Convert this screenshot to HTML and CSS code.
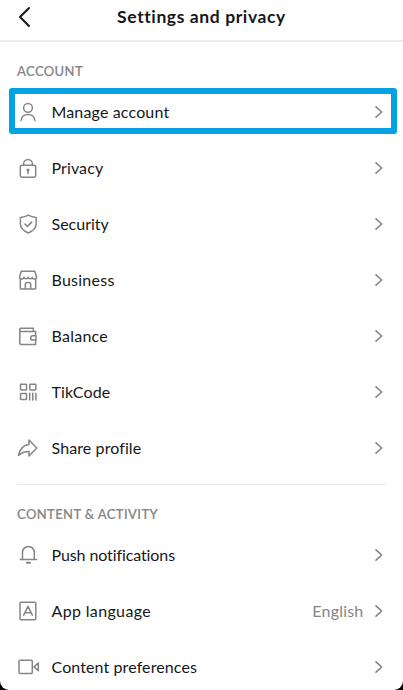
FILE: index.html
```html
<!DOCTYPE html>
<html lang="en">
<head>
<meta charset="utf-8">
<title>Settings and privacy</title>
<link rel="stylesheet" href="styles.css">
</head>
<body>
<div class="screen">
<header class="header">
  <svg class="back" viewBox="0 0 14 22"><path d="M12 2 3 11l9 9"/></svg>
  <h1>Settings and privacy</h1>
</header>
<main>
<section>
  <h2>ACCOUNT</h2>
  <ul>
    <li class="row selected"><svg class="icon" viewBox="0 0 24 24"><circle cx="12" cy="7.800" r="4.400"/><path d="M5 20.500c.5-4 3.100-6 7-6s6.500 2 7 6"/></svg><span class="label manage">Manage account</span><svg class="chevron" viewBox="0 0 8 12"><path d="m1 .8 5.700 5.200L1 11.200"/></svg></li>
    <li class="row"><svg class="icon" viewBox="0 0 24 24"><rect x="4.300" y="9.300" width="15.400" height="11.900" rx="2"/><path d="M7.600 9.300V7.800a4.400 4.400 0 0 1 8.800 0v1.500M12 14.500v3"/><circle class="solid" cx="12" cy="14" r="1.600"/></svg><span class="label">Privacy</span><svg class="chevron" viewBox="0 0 8 12"><path d="m1 .8 5.700 5.200L1 11.200"/></svg></li>
    <li class="row"><svg class="icon" viewBox="0 0 24 24"><path d="M12.300 3.200c2.400 1.400 4.900 2 7.900 2.300v6.300c0 4.300-3.100 7.200-7.900 9.200-4.800-2-7.900-4.900-7.900-9.200V5.500c3-.3 5.500-.9 7.900-2.300ZM9 12.100l2.400 2.300 4.300-4.300"/></svg><span class="label security">Security</span><svg class="chevron" viewBox="0 0 8 12"><path d="m1 .8 5.700 5.200L1 11.200"/></svg></li>
    <li class="row"><svg class="icon" viewBox="0 0 24 24"><path d="M5.200 3.300h13.600l1.800 5.600c0 2.600-3.900 2.900-4.300.4-.5 2-3.700 2-4.200 0-.5 2-3.700 2-4.200 0-.4 2.500-4.300 2.200-4.300-.4ZM4.300 11v9.300a.6.6 0 0 0 .6.6h14.200a.6.6 0 0 0 .6-.6V11M9.300 20.900v-4.500a2 2 0 0 1 2-2h1.400a2 2 0 0 1 2 2v4.500"/></svg><span class="label business">Business</span><svg class="chevron" viewBox="0 0 8 12"><path d="m1 .8 5.700 5.200L1 11.200"/></svg></li>
    <li class="row"><svg class="icon" viewBox="0 0 24 24"><path d="M17.300 7.400V4.300H5a1.200 1.200 0 0 0-1.200 1.200v13.700A1.200 1.200 0 0 0 5 20.400h14.600v-4.200M3.800 7.400h15.800v4.300M20 11.800h-3.200a2.100 2.100 0 0 0 0 4.200H20Z"/></svg><span class="label business">Balance</span><svg class="chevron" viewBox="0 0 8 12"><path d="m1 .8 5.700 5.200L1 11.200"/></svg></li>
    <li class="row"><svg class="icon" viewBox="0 0 24 24"><rect x="4.500" y="4.300" width="6" height="5.700" rx=".4"/><rect x="13.800" y="4.300" width="6" height="5.700" rx=".4"/><rect x="4.500" y="13.500" width="6" height="6" rx=".4"/><path d="M13.700 13.200v6.700m3.100-6.700v6.700m3.100-6.700v6.700"/></svg><span class="label">TikCode</span><svg class="chevron" viewBox="0 0 8 12"><path d="m1 .8 5.700 5.200L1 11.200"/></svg></li>
    <li class="row"><svg class="icon" viewBox="0 0 24 24"><path d="M13 3.900 20.700 12 13 19.900v-4.500c-4.600 0-7.400 1-10.500 4.100 1.300-6.500 5-10.400 10.500-11Z"/></svg><span class="label share">Share profile</span><svg class="chevron" viewBox="0 0 8 12"><path d="m1 .8 5.700 5.200L1 11.200"/></svg></li>
  </ul>
</section>
<section class="divided">
  <h2 class="wide">CONTENT &amp; ACTIVITY</h2>
  <ul>
    <li class="row"><svg class="icon" viewBox="0 0 24 24"><path d="M4.200 16.600h16.400M6.500 16.600V9.300a5.900 5.900 0 0 1 11.800 0v7.300"/><path class="clapper" d="M10.900 19.800h3"/></svg><span class="label push">Push notifications</span><svg class="chevron" viewBox="0 0 8 12"><path d="m1 .8 5.700 5.200L1 11.200"/></svg></li>
    <li class="row"><svg class="icon" viewBox="0 0 24 24"><rect x="4" y="3.200" width="15.800" height="17.500" rx="1"/><path d="M7.700 16.200 12 7.400l4.300 8.800M9.200 13.700h5.600"/></svg><span class="label language">App language</span><span class="value">English</span><svg class="chevron" viewBox="0 0 8 12"><path d="m1 .8 5.700 5.200L1 11.200"/></svg></li>
    <li class="row"><svg class="icon" viewBox="0 0 24 24"><rect x="3" y="5.200" width="13.300" height="13.400" rx="1"/><path d="M22.300 8.100 18 11.900l4.300 3.900Z"/></svg><span class="label content">Content preferences</span><svg class="chevron" viewBox="0 0 8 12"><path d="m1 .8 5.700 5.200L1 11.200"/></svg></li>
  </ul>
</section>
</main>
</div>
</body>
</html>
```
FILE: styles.css
```css
* { box-sizing: border-box; }
html { background: #000; }
body { margin: 0; height: 690px; overflow: hidden; font-family: Lato, "Liberation Sans", sans-serif; color: #161719; }
.screen { height: 690px; overflow: hidden; background: #fff; border-radius: 0 0 9px 9px; }
svg { flex: none; fill: none; stroke: #858585; stroke-linejoin: round; stroke-linecap: round; }
.header { display: grid; grid-template-columns: 50px 1fr 50px; align-items: center; height: 42px; padding-bottom: 6px; border-bottom: 2px solid #ececec; }
.back { width: 14px; height: 22px; margin-left: 17px; stroke: #161719; stroke-width: 2; }
h1 { margin: 0; font-size: 17.500px; line-height: 24px; font-weight: 700; text-align: center; letter-spacing: .6px; }
h2 { margin: 0; padding-left: 17px; font-size: 13px; line-height: 18px; font-weight: 500; color: #858585; letter-spacing: .4px; -webkit-text-stroke: .2px #858585; }
main { padding-top: 20px; }
ul { list-style: none; margin: 0; padding: 0; }
section > ul { padding-top: 4px; }
.row { position: relative; display: flex; align-items: center; height: 56px; padding: 0 20.500px 0 16px; font-size: 16px; }
.selected::after { content: ""; position: absolute; inset: 4px 6px 6px 9px; border: 6px solid #04a2e3; border-radius: 3px; }
.icon { width: 24px; height: 24px; margin-right: 11.500px; stroke-width: 1.500; }
.label { flex: 1; white-space: nowrap; line-height: 22px; letter-spacing: .1px; }
.manage { letter-spacing: .15px; }
.security { letter-spacing: 0; }
.business { letter-spacing: .25px; }
.push { letter-spacing: -.1px; }
.language { letter-spacing: .35px; }
.chevron { width: 8px; height: 12px; stroke-width: 1.600; }
.value { color: #858585; margin-right: 11px; letter-spacing: .2px; line-height: 22px; }
.solid { fill: #858585; stroke: none; }
.clapper { stroke-width: 2; }
.divided::before { content: ""; display: block; height: 1px; margin: 8px 17px 20px; background: #e8e8e8; }
.divided > ul { padding-top: 4px; }
```
